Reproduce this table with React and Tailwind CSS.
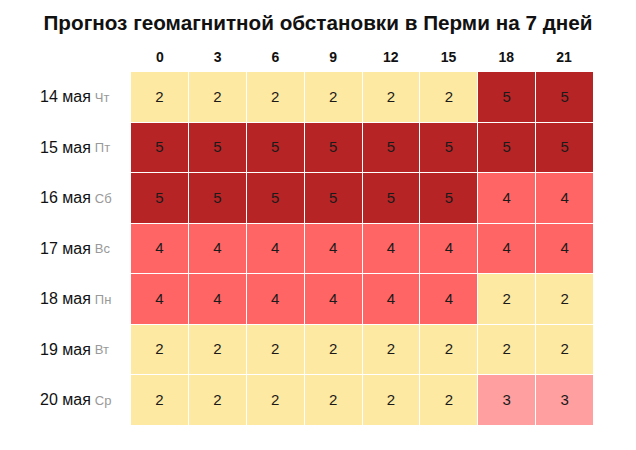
const HOURS = [0, 3, 6, 9, 12, 15, 18, 21]

const DAYS = [
    { date: "14 мая", wd: "Чт", kp: [2, 2, 2, 2, 2, 2, 5, 5] },
    { date: "15 мая", wd: "Пт", kp: [5, 5, 5, 5, 5, 5, 5, 5] },
    { date: "16 мая", wd: "Сб", kp: [5, 5, 5, 5, 5, 5, 4, 4] },
    { date: "17 мая", wd: "Вс", kp: [4, 4, 4, 4, 4, 4, 4, 4] },
    { date: "18 мая", wd: "Пн", kp: [4, 4, 4, 4, 4, 4, 2, 2] },
    { date: "19 мая", wd: "Вт", kp: [2, 2, 2, 2, 2, 2, 2, 2] },
    { date: "20 мая", wd: "Ср", kp: [2, 2, 2, 2, 2, 2, 3, 3] }
]

const KP_COLORS = {
    2: "bg-[#fde9a1]",
    3: "bg-[#ff9f9f]",
    4: "bg-[#ff6565]",
    5: "bg-[#b72426]"
}

export default function App() {
    return (
        <div className="w-[636px] h-[450px] bg-white font-['Liberation_Sans',Arial,sans-serif] text-[#111]">
            <h1 className="pt-[9px] h-[44px] text-center text-[20.7px] leading-[28px] font-bold">
                Прогноз геомагнитной обстановки в Перми на 7 дней
            </h1>

            <div className="flex">
                <div className="w-[131px] shrink-0">
                    <div className="h-[28px]" />
                    {DAYS.map(d => (
                        <div key={d.date} className="h-[50.5px] flex items-center pl-[40px]">
                            <span className="text-[16px]">{d.date}</span>
                            <span className="ml-[4px] text-[13px] text-[#999]">{d.wd}</span>
                        </div>
                    ))}
                </div>

                <div className="w-[462px]">
                    <div className="grid grid-cols-[repeat(8,1fr)] h-[28px]">
                        {HOURS.map(h => (
                            <div key={h} className="flex items-center justify-center text-[14px] font-bold pb-[1px]">
                                {h}
                            </div>
                        ))}
                    </div>
                    <div className="grid grid-cols-[repeat(8,1fr)] grid-rows-[repeat(7,49.5px)] gap-px bg-white">
                        {DAYS.map(d =>
                            d.kp.map((v, i) => (
                                <div
                                    key={d.date + i}
                                    className={`flex items-center justify-center text-[15px] text-[#1a1a1a] ${KP_COLORS[v]}`}
                                >
                                    {v}
                                </div>
                            ))
                        )}
                    </div>
                </div>
            </div>
        </div>
    )
}
